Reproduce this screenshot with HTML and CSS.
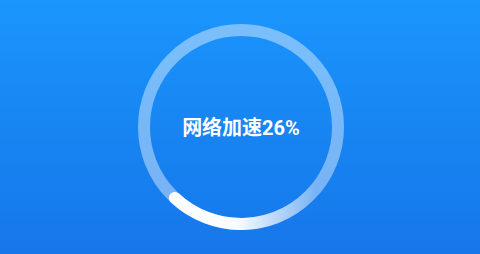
FILE: index.html
```html
<!DOCTYPE html>
<html lang="zh">
<head>
  <meta charset="UTF-8" />
  <meta name="viewport" content="width=device-width, initial-scale=1.0"/>
  <title>网络加速</title>
  <link rel="stylesheet" href="styles.css">
</head>
<body>

  <div class="speed-page">
    <div class="speed-ring">
      <svg class="speed-ring-svg" viewBox="0 0 206 206" width="206" height="206">
        <defs>
          <linearGradient id="speedArc" x1="36" y1="0" x2="178" y2="0" gradientUnits="userSpaceOnUse">
            <stop offset="0" stop-color="#fff" stop-opacity="1"/>
            <stop offset="0.45" stop-color="#fff" stop-opacity="0.95"/>
            <stop offset="1" stop-color="#fff" stop-opacity="0"/>
          </linearGradient>
        </defs>
        <circle cx="103" cy="103" r="97" fill="none" stroke="#fff" stroke-opacity="0.42" stroke-width="12"/>
        <path d="M36.8 173.9 A97 97 0 0 0 177.3 165.4" fill="none" stroke="url(#speedArc)" stroke-width="12" stroke-linecap="round"/>
      </svg>
      <div class="speed-label">网络加速26%</div>
    </div>
  </div>

</body>
</html>
```

FILE: styles.css
```css
* {
  box-sizing: border-box;
}

body {
  margin: 0;
  font-family: Roboto, "Noto Sans CJK SC", sans-serif;
}

.speed-page {
  width: 480px;
  height: 254px;
  display: flex;
  align-items: center;
  justify-content: center;
  padding-left: 2px;
  background: linear-gradient(180deg, #1b96fd 0%, #1785f2 50%, #1777ea 100%);
}

.speed-ring {
  display: grid;
  width: 206px;
  height: 206px;
}

.speed-ring-svg,
.speed-label {
  grid-area: 1 / 1;
}

.speed-label {
  align-self: center;
  justify-self: center;
  margin-bottom: 2px;
  color: #fff;
  font-size: 20px;
  font-weight: bold;
}
```
